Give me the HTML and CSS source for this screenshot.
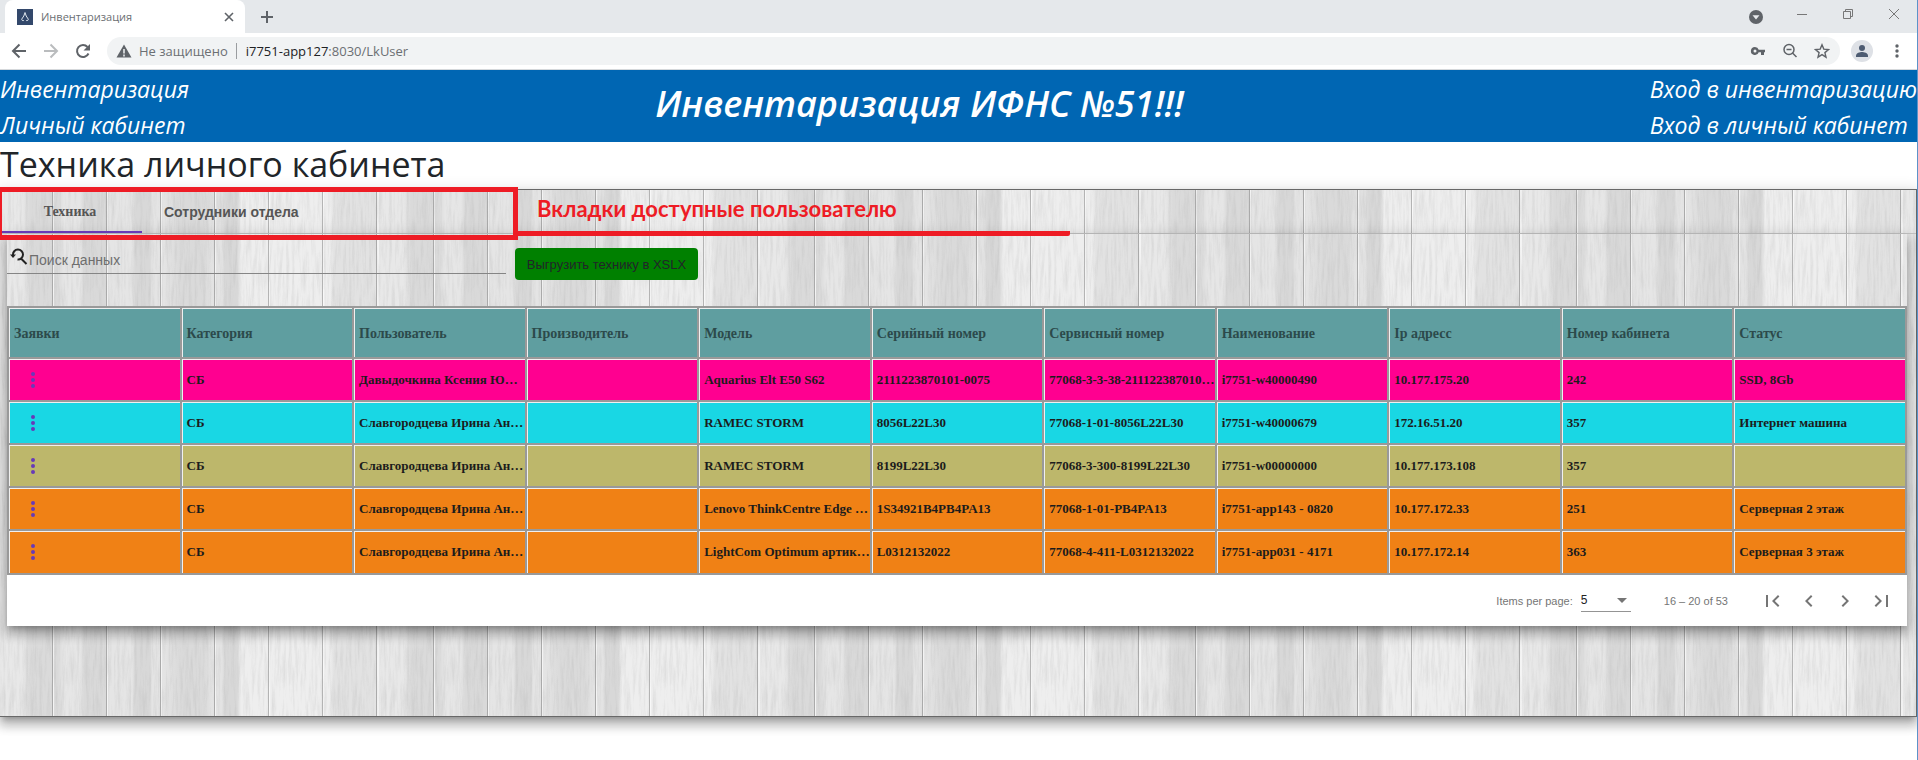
FILE: index.html
```html
<!DOCTYPE html>
<html lang="ru">
<head>
<meta charset="utf-8">
<title>Инвентаризация</title>
<link rel="stylesheet" href="styles.css">
</head>
<body>
<div class="tabstrip">
  <div class="browser-tab">
    <svg class="favicon" viewBox="0 0 16 16"><rect width="16" height="16" fill="#33486b"/><path d="M8 3.500 6.800 7 4.800 10c-.5 1.200 1 2 2 1.500M8 3.500 9.200 7l2 3c.5 1.200-1 2-2 1.500" fill="none" stroke="#dfe6ee" stroke-width="1"/></svg>
    <span class="browser-tab-title">Инвентаризация</span>
    <button class="bare" aria-label="Закрыть вкладку"><svg width="16" height="16" viewBox="0 0 16 16"><path d="m4 4 8 8m0-8-8 8" stroke="#5f6368" stroke-width="1.600"/></svg></button>
  </div>
  <button class="bare new-tab" aria-label="Новая вкладка"><svg width="16" height="16" viewBox="0 0 16 16"><path d="M8 2v12M2 8h12" stroke="#5f6368" stroke-width="2"/></svg></button>
  <div class="window-controls">
    <button class="bare" aria-label="Поиск вкладок"><svg width="16" height="16" viewBox="0 0 16 16"><circle cx="8" cy="8" r="7" fill="#5f6368"/><path d="M4.500 6.300h7L8 10.500z" fill="#e8eaed"/></svg></button>
    <button class="bare" aria-label="Свернуть"><svg width="16" height="16" viewBox="0 0 16 16"><path d="M3 5.500h10" stroke="#777"/></svg></button>
    <button class="bare" aria-label="Окно"><svg width="16" height="16" viewBox="0 0 16 16" fill="none" stroke="#777"><path d="M3.500 2.500h7v7h-7zM5.500 2.500v-2h7v7h-2"/></svg></button>
    <button class="bare" aria-label="Закрыть"><svg width="16" height="16" viewBox="0 0 16 16"><path d="m3 0 10 10m0-10L3 10" stroke="#777"/></svg></button>
  </div>
</div>
<div class="toolbar">
  <button class="bare" aria-label="Назад"><svg width="16" height="16" viewBox="0 0 16 16" fill="none" stroke="#5f6368" stroke-width="2"><path d="M15 8H2.500M8.500 1.500 2 8l6.500 6.500"/></svg></button>
  <button class="bare" aria-label="Вперёд"><svg width="16" height="16" viewBox="0 0 16 16" fill="none" stroke="#babcbe" stroke-width="2"><path d="M1 8h12.500M7.500 1.500 14 8l-6.500 6.500"/></svg></button>
  <button class="bare" aria-label="Обновить"><svg width="16" height="16" viewBox="0 0 16 16"><path d="M13.500 10.500a6 6 0 1 1-1-6.500" fill="none" stroke="#5f6368" stroke-width="2"/><path d="M15 1v6.500H8.500z" fill="#5f6368"/></svg></button>
  <div class="omnibox">
    <svg width="16" height="16" viewBox="0 0 16 16"><path d="M8 1.500 15.500 14.500H.5z" fill="#5f6368"/><path d="M8 6v4.500m0 1v2" stroke="#f1f3f4" stroke-width="1.500"/></svg>
    <span class="insecure">Не защищено</span>
    <span class="url"><b>i7751-app127</b>:8030/LkUser</span>
    <div class="omni-icons">
      <svg width="16" height="16" viewBox="0 0 16 16"><path fill="#5f6368" fill-rule="evenodd" d="M5 4a4 4 0 1 0 3.700 5.200H11V12h3V9.200h1V6.800H8.700A4 4 0 0 0 5 4zm0 2.500a1.500 1.500 0 1 1 0 3 1.500 1.500 0 0 1 0-3z"/></svg>
      <svg width="16" height="16" viewBox="0 0 16 16" fill="none" stroke="#5f6368" stroke-width="1.500"><circle cx="7" cy="6.500" r="5"/><path d="m10.500 10 4 4M4.500 6.500h5"/></svg>
      <svg width="16" height="16" viewBox="0 0 16 16"><path d="m8 1.800 1.800 4.300 4.700.4-3.600 3.100 1.100 4.600-4-2.500-4 2.500 1.100-4.600L1.500 6.500l4.700-.4z" fill="none" stroke="#5f6368" stroke-width="1.400"/></svg>
    </div>
  </div>
  <svg width="22" height="22" viewBox="0 0 22 22"><circle cx="11" cy="11" r="11" fill="#dee1e6"/><circle cx="11" cy="8" r="3" fill="#4d5b71"/><path d="M5 17v-1.500c0-2.500 4-3.500 6-3.500s6 1 6 3.500V17z" fill="#4d5b71"/></svg>
  <button class="bare browser-menu" aria-label="Меню браузера"><svg width="16" height="16" viewBox="0 0 16 16" fill="#5f6368"><circle cx="8" cy="3" r="1.700"/><circle cx="8" cy="8" r="1.700"/><circle cx="8" cy="13" r="1.700"/></svg></button>
</div>

<header class="site-header">
  <nav class="links"><a href="#">Инвентаризация</a><a href="#">Личный кабинет</a></nav>
  <div class="site-title">Инвентаризация ИФНС №51!!!</div>
  <nav class="links"><a href="#">Вход в инвентаризацию</a><a href="#">Вход в личный кабинет</a></nav>
</header>

<h1>Техника личного кабинета</h1>

<main class="card">
  <div class="tabs" role="tablist">
    <button class="tab tab-active" role="tab" aria-selected="true">Техника</button>
    <button class="tab" role="tab">Сотрудники отдела</button>
  </div>
  <div class="frame"></div>
  <div class="note">Вкладки доступные пользователю</div>

  <section class="panel">
    <div class="tools">
      <label class="search">
        <svg width="18" height="18" viewBox="0 0 18 18" fill="none" stroke="#222" stroke-width="2"><path d="M3 7a5 5 0 1 1 4.500 4.500M11 10.500l5.500 5.500"/><path d="M0 6.500h6L3 10z" fill="#222" stroke="none"/></svg>
        <input type="text" placeholder="Поиск данных" aria-label="Поиск данных">
      </label>
      <button class="export">Выгрузить технику в XSLX</button>
    </div>
    <table>
      <thead><tr><th>Заявки</th><th>Категория</th><th>Пользователь</th><th>Производитель</th><th>Модель</th><th>Серийный номер</th><th>Сервисный номер</th><th>Наименование</th><th>Ip адресс</th><th>Номер кабинета</th><th>Статус</th></tr></thead>
      <tbody>
        <tr class="pink"><td><button class="bare row-menu" aria-label="Действия"><i></i><i></i><i></i></button></td><td>СБ</td><td>Давыдочкина Ксения Ю…</td><td></td><td>Aquarius Elt E50 S62</td><td>2111223870101-0075</td><td>77068-3-3-38-211122387010…</td><td>i7751-w40000490</td><td>10.177.175.20</td><td>242</td><td>SSD, 8Gb</td></tr>
        <tr class="cyan"><td><button class="bare row-menu" aria-label="Действия"><i></i><i></i><i></i></button></td><td>СБ</td><td>Славгородцева Ирина Ан…</td><td></td><td>RAMEC STORM</td><td>8056L22L30</td><td>77068-1-01-8056L22L30</td><td>i7751-w40000679</td><td>172.16.51.20</td><td>357</td><td>Интернет машина</td></tr>
        <tr class="olive"><td><button class="bare row-menu" aria-label="Действия"><i></i><i></i><i></i></button></td><td>СБ</td><td>Славгородцева Ирина Ан…</td><td></td><td>RAMEC STORM</td><td>8199L22L30</td><td>77068-3-300-8199L22L30</td><td>i7751-w00000000</td><td>10.177.173.108</td><td>357</td><td></td></tr>
        <tr class="orange"><td><button class="bare row-menu" aria-label="Действия"><i></i><i></i><i></i></button></td><td>СБ</td><td>Славгородцева Ирина Ан…</td><td></td><td>Lenovo ThinkCentre Edge …</td><td>1S34921B4PB4PA13</td><td>77068-1-01-PB4PA13</td><td>i7751-app143 - 0820</td><td>10.177.172.33</td><td>251</td><td>Серверная 2 этаж</td></tr>
        <tr class="orange"><td><button class="bare row-menu" aria-label="Действия"><i></i><i></i><i></i></button></td><td>СБ</td><td>Славгородцева Ирина Ан…</td><td></td><td>LightCom Optimum артик…</td><td>L0312132022</td><td>77068-4-411-L0312132022</td><td>i7751-app031 - 4171</td><td>10.177.172.14</td><td>363</td><td>Серверная 3 этаж</td></tr>
      </tbody>
    </table>
    <div class="paginator">
      <label class="page-size">Items per page:
        <span class="select-wrap"><select><option>5</option><option>10</option></select><svg width="10" height="5" viewBox="0 0 10 5"><path d="M0 0h10L5 5z" fill="#757575"/></svg></span>
      </label>
      <span class="range">16 – 20 of 53</span>
      <div class="pages">
        <button class="bare" aria-label="Первая"><svg width="24" height="24" viewBox="0 0 24 24"><path fill="#757575" d="M18.400 16.600 13.800 12l4.600-4.600L17 6l-6 6 6 6zM5 6h2v12H5z"/></svg></button>
        <button class="bare" aria-label="Назад"><svg width="24" height="24" viewBox="0 0 24 24"><path fill="#757575" d="M15.400 7.400 14 6l-6 6 6 6 1.400-1.400-4.600-4.600z"/></svg></button>
        <button class="bare" aria-label="Вперёд"><svg width="24" height="24" viewBox="0 0 24 24"><path fill="#757575" d="M10 6 8.600 7.400l4.600 4.600-4.600 4.600L10 18l6-6z"/></svg></button>
        <button class="bare" aria-label="Последняя"><svg width="24" height="24" viewBox="0 0 24 24"><path fill="#757575" d="m5.600 7.400 4.600 4.600-4.600 4.600L7 18l6-6-6-6zM17 6h2v12h-2z"/></svg></button>
      </div>
    </div>
  </section>
</main>
</body>
</html>
```

FILE: styles.css
```css
* { box-sizing: border-box; }

body {
  margin: 0;
  min-height: 100vh;
  border-right: 1px solid #5c93c9;
  background: #fff;
  color: #212529;
  font-family: "Open Sans", "Noto Sans", sans-serif;
  overflow-x: hidden;
}

button, input, select { font: inherit; color: inherit; }
svg { display: block; flex: none; }

.bare {
  display: flex;
  align-items: center;
  justify-content: center;
  padding: 0;
  border: 0;
  background: none;
}

/* Browser window */
.tabstrip {
  display: flex;
  align-items: center;
  height: 33px;
  padding-left: 5px;
  background: #e5e8eb;
}
.browser-tab {
  display: flex;
  align-items: center;
  gap: 8px;
  width: 240px;
  height: 33px;
  padding: 0 8px 0 12px;
  border-radius: 8px 8px 0 0;
  background: #fff;
}
.favicon { width: 16px; height: 16px; }
.browser-tab-title { flex: 1; color: #6b6f73; font-size: 11px; }
.new-tab { margin-left: 14px; }
.window-controls { display: flex; gap: 30px; margin: 0 15px 0 auto; }

.toolbar {
  display: flex;
  align-items: center;
  gap: 16px;
  height: 37px;
  padding: 0 13px 0 11px;
  border-bottom: 1px solid #d5d8db;
}
.omnibox {
  display: flex;
  flex: 1;
  align-items: center;
  height: 28px;
  margin-right: -5px;
  padding: 0 10px 0 9px;
  border-radius: 14px;
  background: #f1f3f4;
  color: #6b6f73;
  font-size: 13px;
}
.insecure { margin-left: 7px; padding-right: 8px; border-right: 1px solid #9a9da0; line-height: 16px; }
.url { margin-left: 9px; }
.url b { color: #202124; font-weight: 400; }
.omni-icons { display: flex; gap: 16px; margin-left: auto; }
.browser-menu { margin-right: -1px; }

/* Site header */
.site-header {
  display: flex;
  align-items: center;
  justify-content: space-between;
  height: 72px;
  background: #0066b3;
  color: #fff;
  font-style: italic;
}
.links { display: flex; flex-direction: column; padding-top: 2px; }
.links a { color: #fff; font-size: 23px; line-height: 36px; text-decoration: none; }
.site-title { padding-bottom: 4px; font-size: 36px; font-weight: 600; line-height: 54px; }

h1 { margin: 0; font-size: 34px; font-weight: 500; line-height: 44px; padding-bottom: 2px; }

/* Plank-textured card */
.card {
  position: relative;
  height: 528px;
  margin-top: 1px;
  border: 1px solid #686868;
  border-left: 0;
  background:
    url("data:image/svg+xml,%3Csvg xmlns='http://www.w3.org/2000/svg' width='381' height='528'%3E%3Cfilter id='g' x='0' y='0' width='100%25' height='100%25'%3E%3CfeTurbulence type='fractalNoise' baseFrequency='.35 .03' numOctaves='4' seed='4' stitchTiles='stitch'/%3E%3CfeColorMatrix values='0 0 0 0 .4 0 0 0 0 .4 0 0 0 0 .4 .5 0 0 0 -.2'/%3E%3C/filter%3E%3Crect width='381' height='528' filter='url(%23g)'/%3E%3C/svg%3E"),
    repeating-linear-gradient(90deg, transparent 0 52px, #aaa 52px 53px, #f4f4f4 53px 54px, transparent 54px 106px, #aaa 106px 107px, #f4f4f4 107px 108px, transparent 108px 160px, #aaa 160px 161px, #f4f4f4 161px 162px, transparent 162px 214px, #aaa 214px 215px, #f4f4f4 215px 216px, transparent 216px 268px, #b4b4b4 268px 269px, #f8f8f8 269px 270px, transparent 270px 322px, #b4b4b4 322px 323px, #f8f8f8 323px 324px, transparent 324px 376px, #aaa 376px 377px, #f4f4f4 377px 379px, transparent 379px 381px),
    repeating-linear-gradient(90deg, #e8e8e8 0 22px, #dadada 30px 58px, #e6e6e6 64px 80px, #d9d9d9 84px 106px, #e5e5e5 110px 132px, #d8d8d8 135px 150px, #e4e4e4 152px 164px, #dadada 180px 204px, #e3e3e3 212px 222px, #d8d8d8 225px 237px, #eee 241px 330px, #e2e2e2 334px 374px, #e8e8e8 381px);
  box-shadow: 0 5px 5px -3px rgba(0,0,0,.2), 0 8px 10px 1px rgba(0,0,0,.2), 0 3px 14px 2px rgba(0,0,0,.14);
}

.tabs { display: flex; height: 44px; padding-left: 2px; border-bottom: 1px solid #c3c3c3; }
.tab {
  padding: 0 22px;
  border: 0;
  background: none;
  color: #555;
  font-family: "Liberation Sans", sans-serif;
  font-size: 14px;
  font-weight: 700;
}
.tab-active {
  width: 140px;
  padding: 2px 26px 0 22px;
  border-bottom: 2px solid #673ab7;
  font-family: "Liberation Serif", serif;
}

.frame {
  position: absolute;
  top: -3px;
  left: 0;
  width: 518px;
  height: 53px;
  border: 5px solid #ee1c25;
  border-left-width: 2px;
}
.note {
  position: absolute;
  top: -1px;
  left: 518px;
  width: 552px;
  height: 47px;
  padding-left: 19px;
  border-bottom: 5px solid #ee1c25;
  border-radius: 0 0 2px 0;
  color: #ee1c25;
  font-family: Lato, "Open Sans", sans-serif;
  font-size: 22px;
  font-weight: 700;
  line-height: 40px;
}

.panel {
  margin: 0 9px 0 7px;
  box-shadow: 0 5px 5px -3px rgba(0,0,0,.2), 0 8px 10px 1px rgba(0,0,0,.2), 0 3px 14px 2px rgba(0,0,0,.14);
}
.tools {
  display: flex;
  align-items: flex-start;
  gap: 9px;
  height: 72px;
  padding-top: 14px;
  font-family: "Liberation Sans", sans-serif;
  font-size: 14px;
}
.search {
  display: flex;
  width: 499px;
  height: 26px;
  padding-left: 3px;
  border-bottom: 1px solid #858585;
}
.search input {
  flex: 1;
  height: 24px;
  padding: 0 1px;
  border: 0;
  outline: 0;
  background: none;
}
.search input::placeholder { color: #6e6e6e; opacity: 1; }
.export {
  width: 183px;
  height: 32px;
  padding: 0;
  border: 0;
  border-radius: 4px;
  background: #008000;
  font-size: 13px;
}

/* Equipment table */
table {
  width: 100%;
  table-layout: fixed;
  border-collapse: separate;
  border-spacing: 0;
  border: solid #999;
  border-width: 0 2px 2px 0;
  box-shadow: 0 1px #eee;
  font-family: "Liberation Serif", serif;
  font-weight: 700;
}
th, td {
  height: 43px;
  padding: 0 0 0 5px;
  border: solid #999;
  border-width: 2px 0 0 2px;
  box-shadow: inset 1px 1px #f0f0f0;
  color: #1c1c1c;
  font-size: 13px;
  text-align: left;
  white-space: nowrap;
}
th { height: 51px; padding-top: 2px; background: #5f9ea0; color: #2c4a4b; font-size: 14px; }
.pink { background: #ff0090; }
.cyan { background: #19d7e4; }
.olive { background: #bdb76b; }
.orange { background: #f08115; }
tr:last-child td { height: 44px; }
.row-menu { flex-direction: column; gap: 2px; margin-left: 17px; }
.row-menu i { width: 4px; height: 4px; border-radius: 2px; background: #673ab7; }

.paginator {
  display: flex;
  align-items: center;
  justify-content: flex-end;
  height: 51px;
  padding-right: 14px;
  background: #fff;
  color: #757575;
  font-family: "Liberation Sans", sans-serif;
  font-size: 11px;
}
.page-size { display: flex; align-items: center; gap: 8px; }
.select-wrap { display: flex; align-items: center; width: 50px; height: 22px; padding-right: 4px; border-bottom: 1px solid #949494; }
.select-wrap select { flex: 1; padding: 0; border: 0; appearance: none; background: none; color: #222; font-size: 12px; }
.range { margin: 0 33px; }
.pages { display: flex; gap: 12px; }
```
